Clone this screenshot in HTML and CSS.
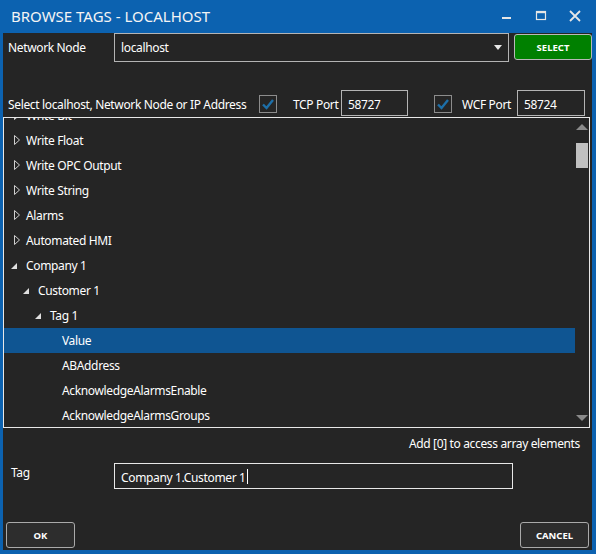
FILE: index.html
```html
<!DOCTYPE html>
<html>
<head>
<meta charset="utf-8">
<link rel="stylesheet" href="styles.css">
</head>
<body>
<div class="window">
  <div class="titlebar">
    <div class="title">BROWSE TAGS - LOCALHOST</div>
    <div class="controls">
      <svg class="ctl" width="12" height="12" viewBox="0 0 12 12"><rect x="1" y="7" width="9" height="2" fill="#e6e6e6"/></svg>
      <svg class="ctl" width="12" height="12" viewBox="0 0 12 12"><rect x="1.5" y="1.5" width="9" height="8" fill="none" stroke="#e6e6e6" stroke-width="1.2"/><rect x="1" y="1" width="10" height="2.2" fill="#e6e6e6"/></svg>
      <svg class="ctl" width="12" height="12" viewBox="0 0 12 12"><path d="M1 1 L11 11 M11 1 L1 11" stroke="#e6e6e6" stroke-width="1.8"/></svg>
    </div>
  </div>
  <div class="content">
    <div class="row-node">
      <div class="label node-label">Network Node</div>
      <div class="combo">
        <span>localhost</span>
        <svg width="8" height="5" viewBox="0 0 8 5"><path d="M0 0 H8 L4 5 Z" fill="#e8e8e8"/></svg>
      </div>
      <button class="btn-select">SELECT</button>
    </div>
    <div class="row-ports">
      <div class="label">Select localhost, Network Node or IP Address</div>
      <div class="check"><svg width="14" height="12" viewBox="0 0 14 12"><path d="M2 6.5 L5.5 10 L12 2" fill="none" stroke="#1d6fa8" stroke-width="2.4"/></svg></div>
      <div class="label port-label">TCP Port</div>
      <div class="port-box tcp">58727</div>
      <div class="check check2"><svg width="14" height="12" viewBox="0 0 14 12"><path d="M2 6.5 L5.5 10 L12 2" fill="none" stroke="#1d6fa8" stroke-width="2.4"/></svg></div>
      <div class="label port-label wcf-label">WCF Port</div>
      <div class="port-box wcf">58724</div>
    </div>
    <div class="tree">
      <div class="tree-items">
        <div class="item lvl0"><span class="tog"><svg width="15" height="10" viewBox="0 0 15 10"><path d="M3.5 0.5 L8.5 5 L3.5 9.5 Z" fill="none" stroke="#d0d0d0" stroke-width="1"/></svg></span>Write Bit</div>
        <div class="item lvl0"><span class="tog"><svg width="15" height="10" viewBox="0 0 15 10"><path d="M3.5 0.5 L8.5 5 L3.5 9.5 Z" fill="none" stroke="#d0d0d0" stroke-width="1"/></svg></span>Write Float</div>
        <div class="item lvl0"><span class="tog"><svg width="15" height="10" viewBox="0 0 15 10"><path d="M3.5 0.5 L8.5 5 L3.5 9.5 Z" fill="none" stroke="#d0d0d0" stroke-width="1"/></svg></span>Write OPC Output</div>
        <div class="item lvl0"><span class="tog"><svg width="15" height="10" viewBox="0 0 15 10"><path d="M3.5 0.5 L8.5 5 L3.5 9.5 Z" fill="none" stroke="#d0d0d0" stroke-width="1"/></svg></span>Write String</div>
        <div class="item lvl0"><span class="tog"><svg width="15" height="10" viewBox="0 0 15 10"><path d="M3.5 0.5 L8.5 5 L3.5 9.5 Z" fill="none" stroke="#d0d0d0" stroke-width="1"/></svg></span>Alarms</div>
        <div class="item lvl0"><span class="tog"><svg width="15" height="10" viewBox="0 0 15 10"><path d="M3.5 0.5 L8.5 5 L3.5 9.5 Z" fill="none" stroke="#d0d0d0" stroke-width="1"/></svg></span>Automated HMI</div>
        <div class="item lvl0"><span class="tog"><svg width="15" height="10" viewBox="0 0 15 10"><path d="M0 9 L6 9 L6 3 Z" fill="#e0e0e0"/></svg></span>Company 1</div>
        <div class="item lvl1"><span class="tog"><svg width="15" height="10" viewBox="0 0 15 10"><path d="M0 9 L6 9 L6 3 Z" fill="#e0e0e0"/></svg></span>Customer 1</div>
        <div class="item lvl2"><span class="tog"><svg width="15" height="10" viewBox="0 0 15 10"><path d="M0 9 L6 9 L6 3 Z" fill="#e0e0e0"/></svg></span>Tag 1</div>
        <div class="item lvl3 selected"><span class="tog"></span>Value</div>
        <div class="item lvl3"><span class="tog"></span>ABAddress</div>
        <div class="item lvl3"><span class="tog"></span>AcknowledgeAlarmsEnable</div>
        <div class="item lvl3"><span class="tog"></span>AcknowledgeAlarmsGroups</div>
      </div>
      <div class="scrollbar">
        <svg class="arrow-up" width="14" height="7" viewBox="0 0 14 7"><path d="M1 7 L7 1 L13 7 Z" fill="#8a8a8a"/></svg>
        <div class="thumb"></div>
        <svg class="arrow-down" width="14" height="7" viewBox="0 0 14 7"><path d="M1 0 L7 6 L13 0 Z" fill="#8a8a8a"/></svg>
      </div>
    </div>
    <div class="hint">Add [0] to access array elements</div>
    <div class="row-tag">
      <div class="label tag-label">Tag</div>
      <div class="tag-input">Company 1.Customer 1<span class="caret"></span></div>
    </div>
    <div class="row-buttons">
      <button class="btn">OK</button>
      <button class="btn">CANCEL</button>
    </div>
  </div>
</div>
</body>
</html>
```

FILE: styles.css
```css
* { box-sizing: border-box; }
html, body {
  margin: 0;
  padding: 0;
  width: 596px;
  height: 554px;
  overflow: hidden;
  background: #0c62b0;
  font-family: "Noto Sans", "Open Sans", sans-serif;
  color: #ffffff;
}
.window {
  width: 596px;
  height: 554px;
  display: flex;
  flex-direction: column;
}
.titlebar {
  height: 33px;
  display: flex;
  align-items: center;
  justify-content: space-between;
}
.title {
  font-size: 15px;
  padding-left: 11px;
  padding-bottom: 1px;
  color: #f4f4f4;
}
.controls {
  display: flex;
  gap: 22px;
  padding-right: 15px;
  padding-bottom: 2px;
}
.ctl { display: block; }
.content {
  flex: 1;
  margin: 0 4px 4px 3px;
  background: #252525;
  display: flex;
  flex-direction: column;
  font-size: 12px;
  letter-spacing: -0.35px;
}
.label { white-space: nowrap; }
.row-node {
  display: flex;
  align-items: flex-start;
  height: 29px;
}
.node-label {
  width: 111px;
  padding-left: 5px;
  line-height: 29px;
}
.combo {
  width: 395px;
  height: 29px;
  border: 1px solid #b4b4b4;
  display: flex;
  align-items: center;
  justify-content: space-between;
  padding: 0 6px 0 6px;
}
.combo span { padding-bottom: 1px; }
.btn-select {
  margin-left: 5px;
  margin-top: 1px;
  width: 78px;
  height: 26px;
  background: #008000;
  border: 1px solid #b8b8b8;
  border-radius: 3px;
  color: #fff;
  font-family: "Noto Sans", sans-serif;
  font-weight: 700;
  font-size: 9.5px;
  letter-spacing: 0;
}
.row-ports {
  display: flex;
  align-items: center;
  margin-top: 28px;
  height: 26px;
}
.row-ports > .label:first-child {
  padding-left: 5px;
  width: 256px;
  padding-top: 2px;
}
.check {
  width: 18px;
  height: 18px;
  border: 1px solid #8c8c8c;
  display: flex;
  align-items: center;
  justify-content: center;
  margin-top: 1px;
}
.port-label { margin-left: 16px; padding-top: 2px; width: 48px; }
.port-box {
  height: 26px;
  border: 1px solid #b4b4b4;
  padding: 5px 0 0 6px;
  margin-left: 0;
}
.tcp { width: 67px; }
.check2 { margin-left: 26px; }
.wcf-label { margin-left: 10px; width: 55px; }
.wcf { width: 68px; }
.tree {
  margin-top: 1px;
  width: 587px;
  height: 311px;
  border: 1px solid #e8e8e8;
  display: flex;
  overflow: hidden;
}
.tree-items {
  flex: 1;
  margin-top: -15px;
}
.item {
  height: 25px;
  display: flex;
  align-items: center;
  white-space: nowrap;
  padding-bottom: 1px;
}
.tog {
  width: 15px;
  height: 10px;
  flex: none;
}
.tog svg { display: block; }
.lvl0 { padding-left: 7px; }
.lvl1 { padding-left: 19px; }
.lvl2 { padding-left: 31px; }
.lvl3 { padding-left: 43px; }
.selected { background: #0f5592; }
.scrollbar {
  width: 14px;
  display: flex;
  flex-direction: column;
  align-items: center;
}
.arrow-up { margin-top: 5px; display: block; }
.thumb {
  margin-top: 13px;
  width: 12px;
  height: 25px;
  background: #c0c0c0;
}
.arrow-down { margin-top: auto; margin-bottom: 5px; display: block; }
.hint {
  text-align: right;
  padding-right: 12px;
  margin-top: 6px;
  height: 20px;
  line-height: 20px;
}
.row-tag {
  display: flex;
  align-items: flex-start;
  margin-top: 9px;
}
.tag-label {
  width: 111px;
  padding-left: 8px;
  margin-top: 1px;
}
.tag-input {
  width: 399px;
  height: 26px;
  border: 1px solid #e8e8e8;
  padding: 5px 0 0 6px;
  display: flex;
  align-items: flex-start;
}
.caret {
  display: inline-block;
  width: 1px;
  height: 15px;
  background: #fff;
  margin-left: 1px;
}
.row-buttons {
  margin-top: auto;
  margin-bottom: 2px;
  display: flex;
  justify-content: space-between;
  padding: 0 3px 0 3px;
}
.btn {
  width: 69px;
  height: 26px;
  background: #2d2d2d;
  border: 1px solid #aaaaaa;
  border-radius: 3px;
  color: #fff;
  font-family: "Noto Sans", sans-serif;
  font-weight: 700;
  font-size: 9.5px;
}
```
